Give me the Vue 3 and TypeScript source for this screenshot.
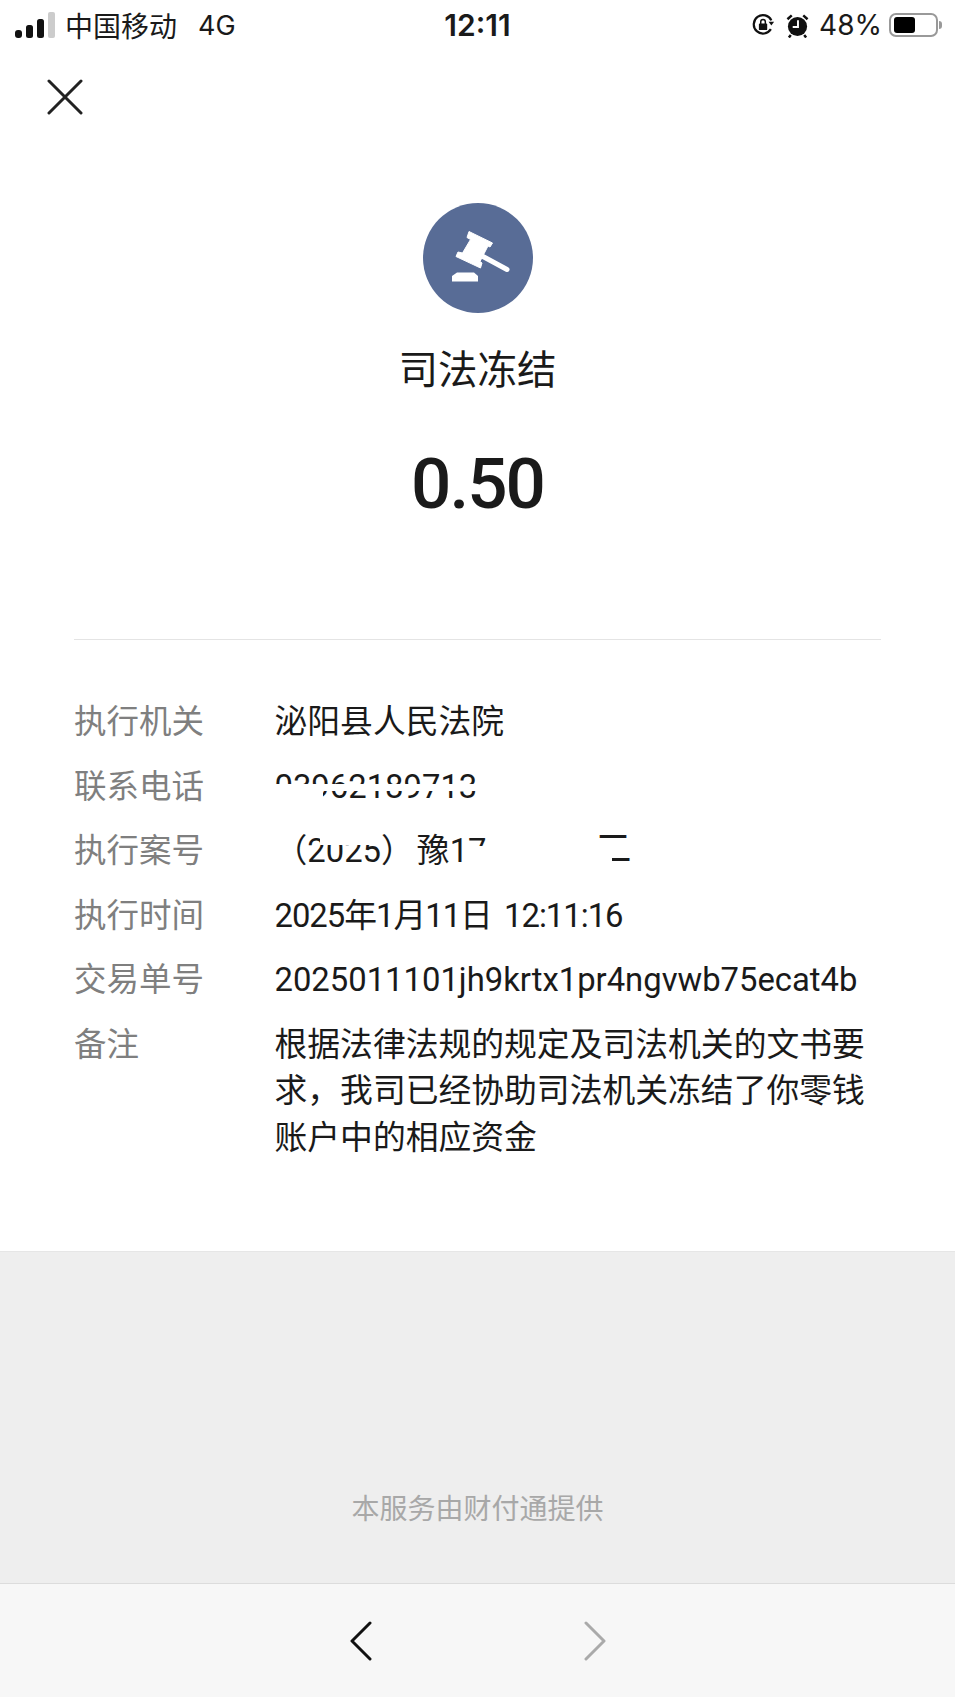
<template>
  <div class="page">
    <div class="status-bar">
      <div class="status-left">
        <svg class="signal" width="40" height="26" viewBox="0 0 40 26">
          <rect x="0" y="18" width="7" height="8" rx="3" fill="#111" />
          <rect x="11" y="13" width="7" height="13" rx="2.5" fill="#111" />
          <rect x="22" y="7" width="7" height="19" rx="2.5" fill="#111" />
          <rect x="33" y="0" width="7" height="26" rx="2" fill="#ccc" />
        </svg>
        <span class="carrier">中国移动</span>
        <span class="network">4G</span>
      </div>
      <div class="clock">12:11</div>
      <div class="status-right">
        <svg width="25" height="24" viewBox="0 0 26 26">
          <path d="M21 17.5A10 10 0 1 1 21.5 8" fill="none" stroke="#111" stroke-width="2.4" />
          <path d="M18.5 9.5h6l-3 4z" fill="#111" />
          <rect x="8" y="11.5" width="9" height="7" rx="1" fill="#111" />
          <path d="M10 12V9.5a2.5 2.5 0 0 1 5 0V12" fill="none" stroke="#111" stroke-width="1.6" />
        </svg>
        <svg width="23" height="25" viewBox="0 0 24 26">
          <circle cx="12" cy="14" r="10" fill="#111" />
          <path d="M1.5 6.5L6 2.5M22.5 6.5L18 2.5M5 23l-2 2.5M19 23l2 2.5" stroke="#111" stroke-width="2.6" />
          <path d="M12.5 7.5v7H7" fill="none" stroke="#fff" stroke-width="2" />
        </svg>
        <span class="percent">48%</span>
        <div class="battery">
          <div class="battery-shell"><div class="battery-level"></div></div>
          <div class="battery-cap"></div>
        </div>
      </div>
    </div>

    <main class="content">
      <div class="close-row">
        <svg width="36" height="36" viewBox="0 0 36 36">
          <path d="M2 2L34 34M34 2L2 34" stroke="#222" stroke-width="3" stroke-linecap="round" />
        </svg>
      </div>

      <div class="summary">
        <div class="badge">
          <svg width="110" height="110" viewBox="0 0 110 110">
            <circle cx="55" cy="55" r="55" fill="#586c96" />
            <path d="M46 28.5L69.5 40L67 44L65 43L57 58.5L59 60L57.5 65L33 53.5L35 49L39.5 50L47.5 36.5L44 34.5z" fill="#fff" stroke="#fff" stroke-linejoin="round" />
            <path d="M60 53.5L84 66.5" stroke="#fff" stroke-width="5" stroke-linecap="round" />
            <path d="M29 78.5V73L34 69.5H51L55 73V78.5z" fill="#fff" />
          </svg>
        </div>
        <div class="title">司法冻结</div>
        <div class="amount">0.50</div>
      </div>

      <div class="details">
        <div class="row">
          <div class="label">执行机关</div>
          <div class="value">泌阳县人民法院</div>
        </div>
        <div class="row">
          <div class="label">联系电话</div>
          <div class="value">
            03962189713
            <span class="mask phone-band"></span>
            <span class="mask phone-left"></span>
          </div>
        </div>
        <div class="row">
          <div class="label">执行案号</div>
          <div class="value">
            （2025）<span class="case-court">豫</span>17<span class="case-tail">二</span>
            <span class="mask case-year"></span>
            <span class="mask case-seven"></span>
            <span class="mask case-stroke"></span>
          </div>
        </div>
        <div class="row">
          <div class="label">执行时间</div>
          <div class="value tight">2025年1月11日 12:11:16</div>
        </div>
        <div class="row">
          <div class="label">交易单号</div>
          <div class="value">2025011101jh9krtx1pr4ngvwb75ecat4b</div>
        </div>
        <div class="row">
          <div class="label">备注</div>
          <div class="value note">根据法律法规的规定及司法机关的文书要求，我司已经协助司法机关冻结了你零钱账户中的相应资金</div>
        </div>
      </div>
    </main>

    <footer class="provider">
      <span>本服务由财付通提供</span>
    </footer>

    <nav class="toolbar">
      <svg width="22" height="40" viewBox="0 0 22 40">
        <path d="M20 2L2 20L20 38" fill="none" stroke="#111" stroke-width="3" stroke-linecap="round" stroke-linejoin="round" />
      </svg>
      <svg width="22" height="40" viewBox="0 0 22 40">
        <path d="M2 2L20 20L2 38" fill="none" stroke="#aaa" stroke-width="3" stroke-linecap="round" stroke-linejoin="round" />
      </svg>
    </nav>
  </div>
</template>

<script setup lang="ts">
</script>

<style>
html,
body {
  margin: 0;
  background: #fff;
}
</style>

<style scoped>
.page {
  width: 955px;
  height: 1697px;
  display: flex;
  flex-direction: column;
  overflow: hidden;
  font-family: Roboto, "Noto Sans CJK SC", sans-serif;
  color: #1a1a1a;
  background: #fff;
}

.status-bar {
  height: 50px;
  padding: 0 9px;
  display: grid;
  grid-template-columns: 1fr auto 1fr;
  align-items: center;
  flex-shrink: 0;
}

.status-left {
  display: flex;
  align-items: center;
  padding-left: 6px;
}

.signal {
  margin-right: 10px;
}

.carrier {
  font-size: 28px;
}

.network {
  font-family: Inter, sans-serif;
  font-size: 27px;
  margin-left: 21px;
}

.clock {
  font-family: Inter, sans-serif;
  font-size: 30px;
  font-weight: 600;
}

.status-right {
  display: flex;
  align-items: center;
  justify-content: flex-end;
  gap: 10px;
  padding-right: 4px;
}

.percent {
  font-family: Inter, sans-serif;
  font-size: 28px;
  margin-right: -3px;
}

.battery {
  display: flex;
  align-items: center;
  gap: 1px;
}

.battery-shell {
  box-sizing: border-box;
  width: 49px;
  height: 24px;
  padding: 2px;
  border: 2px solid #999;
  border-radius: 7px;
}

.battery-level {
  width: 21px;
  height: 100%;
  margin-left: 1px;
  background: #000;
  border-radius: 3px;
}

.battery-cap {
  width: 3px;
  height: 8px;
  background: #999;
  border-radius: 0 3px 3px 0;
}

.content {
  flex: 1;
  padding: 29px 74px 0;
}

.close-row {
  margin-left: -27px;
  height: 36px;
}

.summary {
  display: flex;
  flex-direction: column;
  align-items: center;
  height: 524px;
  border-bottom: 1px solid #e4e4e4;
}

.badge {
  margin-top: 88px;
  height: 110px;
}

.title {
  margin-top: 32px;
  font-size: 39.5px;
  line-height: 52px;
}

.amount {
  margin-top: 45px;
  font-size: 71px;
  line-height: 84px;
  font-weight: 500;
  letter-spacing: -2px;
}

.details {
  padding-top: 59px;
}

.row {
  display: flex;
  margin-bottom: 17.5px;
}

.label {
  width: 200.5px;
  flex-shrink: 0;
  font-size: 32.5px;
  line-height: 47px;
  color: #7f7f7f;
}

.value {
  position: relative;
  width: 595px;
  font-size: 32.8px;
  line-height: 47px;
}

.tight {
  letter-spacing: -1px;
  word-spacing: 5px;
}

.note {
  line-height: 46.5px;
}

.case-court {
  margin-left: 3px;
}

.case-tail {
  margin-left: 108px;
  font-size: 37px;
  line-height: 1;
}

.mask {
  position: absolute;
  background: #fff;
}

.phone-band {
  left: 0;
  top: 20px;
  width: 225px;
  height: 7px;
}

.phone-left {
  left: 0;
  top: 27px;
  width: 48px;
  height: 14px;
}

.case-year {
  left: 45px;
  top: 10px;
  width: 60px;
  height: 7px;
}

.case-seven {
  left: 193px;
  top: 18px;
  width: 35px;
  height: 29px;
}

.case-stroke {
  left: 316px;
  top: 24px;
  width: 21px;
  height: 16px;
}

.provider {
  height: 332px;
  flex-shrink: 0;
  box-sizing: border-box;
  border-top: 1px solid #e6e6e6;
  background: #eeeeee;
  display: flex;
  justify-content: center;
  align-items: flex-end;
  padding: 0 0 53px;
  color: #a8a8a8;
  font-size: 28px;
  line-height: 40px;
}

.toolbar {
  height: 114px;
  flex-shrink: 0;
  box-sizing: border-box;
  border-top: 1px solid #dcdcdc;
  background: #f7f7f7;
  display: flex;
  justify-content: center;
  gap: 212px;
  align-items: center;
}
</style>
